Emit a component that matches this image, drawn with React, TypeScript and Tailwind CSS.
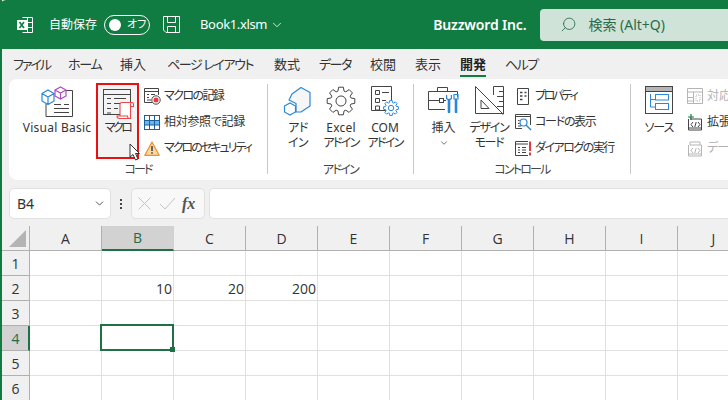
import { ChevronDown, Search } from "lucide-react";
import type { ReactNode } from "react";

const gray = "#444";
const blue = "#2b88d8";

function Svg({ w, h, children, className }: { w: number; h: number; children: ReactNode; className?: string }) {
  return (
    <svg width={w} height={h} viewBox={`0 0 ${w} ${h}`} fill="none" className={className}>
      {children}
    </svg>
  );
}

function ExcelLogo() {
  return (
    <Svg w={18} h={18}>
      <path d="M6.5 1.5H16.5V16.5H6.5M6.5 6.5H16.5M6.5 11.5H16.5M11.5 1.5V16.5" stroke="#fff" />
      <rect x="1" y="4" width="10" height="10" fill="#fff" />
      <path d="M3.5 6L8 12M8 6L3.5 12" stroke="#107c41" strokeWidth="1.6" />
    </Svg>
  );
}

function SaveIcon() {
  return (
    <Svg w={17} h={17}>
      <path d="M.5 .5H16.5V16.5H3L.5 14Z M4.5 .5V6.5H12.5V.5 M4.5 16.5V10.5H12.5V16.5" stroke="#fff" />
    </Svg>
  );
}

function VbIcon() {
  return (
    <Svg w={32} h={31}>
      <path d="M25 4.5H31.5V30.5H5V18" stroke={gray} />
      <path d="M13 18.5H20M13 22.5H28M13 26.5H28M23 18.5H28" stroke={gray} />
      <path d="M1 7.5L7 4L13 7.5V15L7 18.5L1 15ZM1 7.5L7 11L13 7.5M7 11V18.5" fill="#fff" stroke={blue} strokeWidth="1.2" />
      <path d="M14 4L19.5 1L25 4V10L19.5 13L14 10ZM14 4L19.5 7L25 4M19.5 7V13" fill="#fff" stroke="#b146c2" strokeWidth="1.2" />
    </Svg>
  );
}

function MacroIcon() {
  return (
    <Svg w={31} h={31}>
      <rect x=".5" y=".5" width="27" height="25" stroke={gray} />
      <path d="M.5 5.5H27.5" stroke={gray} />
      <path d="M4 9.5H8M11 9.5H23M4 14.5H8M11 14.5H23M4 19.5H8M11 19.5H15M4 24H8" stroke={gray} />
      <path d="M17 27V15Q17 13.5 19 13.5H29Q30.5 13.5 30.5 15.5V17.5H27.5V29.5H16.5Q14 29.5 14 27H24.5Q24.5 28.5 25.5 29.5M27.5 17.5V15.5Q27.5 13.5 29 13.5" fill="#fff" stroke="#e8484a" strokeWidth="1.1" />
    </Svg>
  );
}

function RecordIcon() {
  return (
    <Svg w={17} h={17}>
      <path d="M8 14.5H.5V.5H14.5V7M.5 3.5H14.5" stroke={gray} />
      <path d="M3 6.5H5M7 6.5H11M3 9.5H5M3 12H7" stroke={gray} />
      <circle cx="12" cy="12" r="4.2" fill="#fff" stroke={gray} />
      <circle cx="12" cy="12" r="2.5" fill="#e8383b" />
    </Svg>
  );
}

function RelativeIcon() {
  return (
    <Svg w={16} h={15}>
      <rect x=".5" y=".5" width="15" height="14" fill="#fff" stroke="#1b5f9e" />
      <rect x="1" y="6" width="14" height="4" fill="#6db4e8" />
      <path d="M.5 5.5H15.5M.5 10H15.5M5.5 .5V14.5M10.5 .5V14.5" stroke="#1b5f9e" />
    </Svg>
  );
}

function WarnIcon() {
  return (
    <Svg w={16} h={15}>
      <path d="M8 1L15.2 14.3H.8Z" fill="#fcd8a0" stroke="#e8912d" strokeWidth="1.2" strokeLinejoin="round" />
      <path d="M8 5V10M8 11.2V12.8" stroke="#333" strokeWidth="1.4" />
    </Svg>
  );
}

function AddinIcon() {
  return (
    <Svg w={30} h={30}>
      <path d="M9 8L18 1.5L27 6.5V20L18 26H13V17.5L6 14Z" fill="#f6f6f6" stroke={blue} strokeWidth="1.2" strokeLinejoin="round" />
      <path d="M1.5 20L7 17L12.5 20V26L7 29L1.5 26Z" fill="#fff" stroke={blue} strokeWidth="1.2" />
    </Svg>
  );
}

function GearPath({ c, r, color, sw = 1 }: { c: number; r: number; color: string; sw?: number }) {
  const pts: string[] = [];
  for (let i = 0; i < 8; i++) {
    const a = (i * Math.PI) / 4;
    for (const [d, rr] of [[-0.3, r * 0.74], [-0.17, r], [0.17, r], [0.3, r * 0.74]] as const) {
      pts.push(`${(c + Math.sin(a + d) * rr).toFixed(2)},${(c - Math.cos(a + d) * rr).toFixed(2)}`);
    }
  }
  return (
    <>
      <polygon points={pts.join(" ")} fill="#fff" stroke={color} strokeWidth={sw} strokeLinejoin="round" />
      <circle cx={c} cy={c} r={r * 0.36} fill="#fff" stroke={color} strokeWidth={sw} />
    </>
  );
}

function ExcelAddinIcon() {
  return (
    <Svg w={30} h={30}>
      <GearPath c={15} r={14} color={gray} />
    </Svg>
  );
}

function ComAddinIcon() {
  return (
    <Svg w={28} h={30}>
      <path d="M.5 .5H20.5V24.5H.5Z" stroke={gray} />
      <path d="M4.5 4.5H8.5V8.5H4.5ZM4.5 12.5H8.5V16.5H4.5ZM4.5 20H8.5V24H4.5Z M11 6.5H18M11 14.5H15" stroke={gray} />
      <svg x="12" y="14" width="16" height="16" viewBox="0 0 16 16">
        <GearPath c={8} r={7.5} color={blue} />
      </svg>
    </Svg>
  );
}

function ToolboxIcon() {
  return (
    <Svg w={31} h={27}>
      <path d="M9.5 5V1.5H19.5V5" stroke={gray} />
      <path d="M17 23.5H.5V5.5H29.5V11M.5 14.5H11M16 14.5H18" stroke={gray} />
      <rect x="11.5" y="12.5" width="4" height="4" stroke={gray} />
      <path d="M21 14V26M28 14V26" stroke={blue} strokeWidth="2.6" strokeLinecap="round" />
      <path d="M18.6 9V12.5Q21 15 23.4 12.5V9M26 8.5H30V13H26Z" stroke={blue} strokeWidth="1.2" />
    </Svg>
  );
}

function DesignIcon() {
  return (
    <Svg w={29} h={29}>
      <path d="M.5 .5L27.5 27.5H.5Z M6 14L14 22.5H6Z" stroke={gray} strokeLinejoin="round" />
      <path d="M18.5 .5H28.5V28H27M18.5 .5V9M24 5.5H28M22 10.5H28M24 15.5H28M22 20.5H28" stroke={gray} />
    </Svg>
  );
}

function PropIcon() {
  return (
    <Svg w={16} h={17}>
      <path d="M2.5 .5H13.5V16.5H2.5Z" stroke={gray} />
      <path d="M5 4.5H7.5M5 8H7.5M5 11.5H7.5M9.5 4.5H11.5M9.5 8H11.5" stroke={gray} strokeWidth="1.4" />
    </Svg>
  );
}

function CodeIcon() {
  return (
    <Svg w={17} h={17}>
      <path d="M7 14.5H.5V.5H15.5V11M.5 2.5H15.5" stroke={gray} strokeWidth="1" />
      <circle cx="8.5" cy="8.5" r="3.5" fill="#fff" stroke={blue} strokeWidth="1.2" />
      <path d="M11 11L16 16" stroke={blue} strokeWidth="1.4" />
      <path d="M3 6.5H4.5M3 9.5H4.5M3 12H6" stroke={gray} />
    </Svg>
  );
}

function DialogIcon() {
  return (
    <Svg w={17} h={15}>
      <path d="M13 14.5H.5V.5H13M.5 3H13" stroke={gray} />
      <path d="M3 6.5H5M7 6.5H11M3 9H5M7 9H11M3 11.5H5M7 11.5H11" stroke={gray} />
      <path d="M15 .5V10M15 11.5V14.5" stroke="#e8383b" strokeWidth="2" />
    </Svg>
  );
}

function SourceIcon() {
  return (
    <Svg w={28} h={28}>
      <rect x=".5" y=".5" width="27" height="27" stroke={gray} />
      <rect x="1" y="1" width="26" height="4" fill="#b5b5b5" />
      <path d="M1 5.5H27" stroke={gray} />
      <path d="M5.5 8V21H10M5.5 13.5H10" stroke={blue} />
      <rect x="10.5" y="8.5" width="13" height="5.5" stroke={blue} />
      <rect x="10.5" y="17.5" width="13" height="6" stroke={blue} />
    </Svg>
  );
}

function MapIcon() {
  const c = "#b5b5b5";
  return (
    <Svg w={16} h={16}>
      <path d="M.5 .5H15.5V15.5H.5ZM.5 4H15.5M.5 9.5H7M.5 13H7M6.5 4V15.5" stroke={c} />
      <path d="M9 7H13V13H9Z" stroke={c} strokeDasharray="1 1" />
    </Svg>
  );
}

function PackIcon({ color, plus }: { color: string; plus?: boolean }) {
  return (
    <Svg w={17} h={17}>
      <path d="M3 5H14.5V16H1.5V5M1.5 14H14.5" stroke={color} />
      <path d="M6 8L4 10.5L6 13M11 8L13 10.5L11 13M9.2 8L7.8 13" stroke={color} />
      {plus ? <path d="M4 0V6M1 3H7" stroke="#107c41" strokeWidth="1.2" /> : <path d="M3 5V2H13V5" stroke={color} />}
    </Svg>
  );
}

function Big({ icon, lines, w, className = "" }: { icon: ReactNode; lines: ReactNode[]; w: number; className?: string }) {
  return (
    <div style={{ width: w }} className={`flex h-[80px] shrink-0 flex-col items-center pt-[7px] leading-[15px] text-[#333] ${className}`}>
      <div className="flex h-[34px] items-start justify-center">{icon}</div>
      {lines.map((l, i) => (
        <div key={i} className="flex h-[15px] items-center whitespace-nowrap">{l}</div>
      ))}
    </div>
  );
}

function Small({ icon, text, cls = "", disabled }: { icon: ReactNode; text: string; cls?: string; disabled?: boolean }) {
  return (
    <div className={`flex h-[26px] items-center whitespace-nowrap ${disabled ? "text-[#b0b0b0]" : "text-[#333]"}`}>
      <div className="flex w-[20px] shrink-0 items-center">{icon}</div>
      <span className={cls}>{text}</span>
    </div>
  );
}

function Group({ w, label, labelCls = "", children }: { w: number; label: string; labelCls?: string; children: ReactNode }) {
  return (
    <div style={{ width: w }} className="flex h-full shrink-0 flex-col">
      <div className="flex h-[80px] items-start">{children}</div>
      <div className={`mt-[3px] text-center leading-[15px] text-[#444] ${labelCls}`}>{label}</div>
    </div>
  );
}

function Sep() {
  return <div className="mt-[5px] h-[90px] w-px shrink-0 bg-[#c8c8c8]" />;
}

const tabs = [
  { t: "ファイル", cls: "w-[55px] tracking-[-2px]" },
  { t: "ホーム", cls: "w-[52px] tracking-[-1.3px]" },
  { t: "挿入", cls: "w-[47px]" },
  { t: "ページ レイアウト", cls: "w-[107px] tracking-[-1.4px]" },
  { t: "数式", cls: "w-[45px]" },
  { t: "データ", cls: "w-[51px] tracking-[-1.5px]" },
  { t: "校閲", cls: "w-[45px]" },
  { t: "表示", cls: "w-[45px]" },
];

const cols = ["A", "B", "C", "D", "E", "F", "G", "H", "I", "J"];
const rows = [1, 2, 3, 4, 5, 6];
const data: Record<string, string> = { B2: "10", C2: "20", D2: "200" };

export default function App() {
  return (
    <div className="relative h-[400px] w-[728px] overflow-hidden border-l-2 border-[#107c41] bg-[#f0f0f0] font-['Noto_Sans','Noto_Sans_CJK_JP',sans-serif] text-[12px] [font-feature-settings:'palt']">
      {/* title bar */}
      <div className="-ml-[2px] flex h-[49px] items-center rounded-tl-[6px] bg-[#107c41] text-white">
        <div className="ml-[16px] w-[33px]"><ExcelLogo /></div>
        <span>自動保存</span>
        <div className="ml-[7px] flex h-[20px] w-[46px] items-center rounded-full border border-white pl-[4px]">
          <div className="h-[12px] w-[12px] rounded-full bg-white" />
          <span className="ml-[6px] text-[11px]">オフ</span>
        </div>
        <div className="ml-[13px]"><SaveIcon /></div>
        <span className="ml-[20px] text-[13px] tracking-[-.35px]">Book1.xlsm</span>
        <ChevronDown size={14} strokeWidth={1.4} className="ml-[3px]" />
        <span className="ml-[149px] text-[14px] font-semibold tracking-[-.15px]">Buzzword Inc.</span>
        <div className="ml-[14px] flex h-[32px] flex-1 items-center rounded-l-[4px] bg-[#cfe3d8] text-[#2b6b4b]">
          <Search size={17} strokeWidth={1.2} className="ml-[20px] -scale-x-100" />
          <span className="ml-[11px] text-[14px]">検索 (Alt+Q)</span>
        </div>
      </div>

      {/* tabs */}
      <div className="flex h-[30px] items-center pt-[2px] pl-[11px] text-[13px] text-[#333]">
        {tabs.map((t) => (
          <span key={t.t} className={`shrink-0 whitespace-nowrap ${t.cls}`}>{t.t}</span>
        ))}
        <div className="relative w-[45px] shrink-0 font-bold text-[#222]">
          <span>開発</span>
          <div className="absolute -bottom-[2px] left-0 h-[2px] w-[26px] bg-[#107c41]" />
        </div>
        <span className="tracking-[-1.5px]">ヘルプ</span>
      </div>

      {/* ribbon */}
      <div className="ml-[7px] flex h-[101px] rounded-l-[8px] bg-white">
        <Group w={258} label="コード" labelCls="tracking-[-2px]">
          <div className="ml-[12px] shrink-0">
            <Big w={72} icon={<VbIcon />} lines={[<span className="tracking-[.25px]">Visual Basic</span>]} />
          </div>
          <div className="mt-[4px] ml-[3px] box-border flex h-[76px] w-[43px] shrink-0 flex-col items-center border-2 border-[#e81010] bg-[#f3f3f3] text-[#333]">
            <div className="mt-[4px] ml-[1px] h-[31px]"><MacroIcon /></div>
            <span className="leading-[15px] tracking-[-2.6px]">マクロ</span>
          </div>
          <div className="ml-[5px] mt-[4px] flex flex-col">
            <Small icon={<RecordIcon />} text="マクロの記録" cls="tracking-[-1.6px]" />
            <Small icon={<RelativeIcon />} text="相対参照で記録" cls="tracking-[-.3px]" />
            <Small icon={<WarnIcon />} text="マクロのセキュリティ" cls="tracking-[-2px]" />
          </div>
        </Group>
        <Sep />
        <Group w={145} label="アドイン" labelCls="tracking-[-1.7px]">
          <div className="ml-[15px]">
            <Big w={30} icon={<AddinIcon />} lines={[<span className="tracking-[-.5px]">アド</span>, <span className="tracking-[-.5px]">イン</span>]} />
          </div>
          <div className="ml-[11px]">
            <Big w={34} icon={<ExcelAddinIcon />} lines={[<span className="tracking-[.2px]">Excel</span>, <span className="tracking-[-1.7px]">アドイン</span>]} />
          </div>
          <div className="ml-[8px]">
            <Big w={38} icon={<ComAddinIcon />} lines={["COM", <span className="tracking-[-1.7px]">アドイン</span>]} />
          </div>
        </Group>
        <Sep />
        <Group w={216} label="コントロール" labelCls="tracking-[-1.8px]">
          <div className="ml-[14px]">
            <Big w={31} icon={<ToolboxIcon />} lines={["挿入", <ChevronDown size={10} strokeWidth={1.6} />]} />
          </div>
          <div className="ml-[8px]">
            <Big w={44} icon={<DesignIcon />} lines={[<span className="tracking-[-1.2px]">デザイン</span>, <span className="tracking-[-1.3px]">モード</span>]} />
          </div>
          <div className="ml-[4px] mt-[4px] flex flex-col">
            <Small icon={<PropIcon />} text="プロパティ" cls="tracking-[-2.4px]" />
            <Small icon={<CodeIcon />} text="コードの表示" cls="tracking-[-1.3px]" />
            <Small icon={<DialogIcon />} text="ダイアログの実行" cls="tracking-[-1.5px]" />
          </div>
        </Group>
        <Sep />
        <Group w={98} label="">
          <div className="ml-[12px]">
            <Big w={32} icon={<SourceIcon />} lines={[<span className="tracking-[-1px]">ソース</span>]} />
          </div>
          <div className="ml-[12px] mt-[4px] flex flex-col">
            <Small disabled icon={<MapIcon />} text="対応" />
            <Small icon={<PackIcon color={gray} plus />} text="拡張" />
            <Small disabled icon={<PackIcon color="#b5b5b5" />} text="デー" cls="tracking-[-1px]" />
          </div>
        </Group>
      </div>

      {/* formula bar */}
      <div className="flex h-[46px] items-start pt-[8px]">
        <div className="ml-[7px] flex h-[31px] w-[102px] shrink-0 items-center justify-between rounded-[5px] border border-[#e0e0e0] bg-white pl-[7px] pr-[4px] text-[14px] text-[#333]">
          B4
          <ChevronDown size={13} strokeWidth={1.5} />
        </div>
        <div className="flex h-[31px] w-[20px] shrink-0 flex-col items-center justify-center gap-[2px]">
          <i className="h-[2px] w-[2px] bg-[#444]" />
          <i className="h-[2px] w-[2px] bg-[#444]" />
          <i className="h-[2px] w-[2px] bg-[#444]" />
        </div>
        <div className="flex h-[31px] w-[74px] shrink-0 items-center rounded-[5px] border border-[#e0e0e0] bg-[#f8f8f8] pl-[6px]">
          <Svg w={13} h={13}><path d="M.5 .5L12.5 12.5M12.5 .5L.5 12.5" stroke="#c4c4c4" /></Svg>
          <Svg w={17} h={13} className="ml-[8px]"><path d="M1 7L6 12L16 1" stroke="#c4c4c4" /></Svg>
          <span className="ml-[6px] font-['Liberation_Serif',serif] text-[16px] font-bold italic leading-none text-[#555]">fx</span>
        </div>
        <div className="ml-[4px] h-[31px] flex-1 rounded-l-[5px] border border-r-0 border-[#e0e0e0] bg-white" />
      </div>

      {/* sheet */}
      <div className="bg-white font-['Open_Sans','Noto_Sans_CJK_JP',sans-serif] text-[14px] text-[#333]">
        <div className="flex h-[25px]">
          <div className="relative h-[25px] w-[28px] shrink-0 border-r border-b border-[#b0b0b0] bg-[#f0f0f0]">
            <div className="absolute top-[4px] left-[7px] h-0 w-0 border-b-[17px] border-l-[17px] border-b-[#b4b4b4] border-l-transparent" />
          </div>
          {cols.map((c) => (
            <div
              key={c}
              className={
                c === "B"
                  ? "flex w-[72px] shrink-0 items-center justify-center border-r border-b-2 border-[#d0d0d0] border-b-[#1f7145] bg-[#d2d2d2] text-[#1f6b47]"
                  : "flex w-[72px] shrink-0 items-center justify-center border-r border-b border-[#b0b0b0] bg-[#f0f0f0]"
              }
            >
              {c}
            </div>
          ))}
        </div>
        {rows.map((r) => (
          <div key={r} className="flex h-[25px]">
            <div
              className={
                r === 4
                  ? "flex w-[28px] shrink-0 items-center justify-center border-r-2 border-b border-[#b0b0b0] border-r-[#1f7145] bg-[#d2d2d2] pl-[1px] text-[#1f6b47]"
                  : "flex w-[28px] shrink-0 items-center justify-center border-r border-b border-[#b0b0b0] bg-[#f0f0f0]"
              }
            >
              {r}
            </div>
            {cols.map((c) => (
              <div key={c} className="relative flex w-[72px] shrink-0 items-center justify-end border-r border-b border-[#e0e0e0] pr-[1px]">
                {data[`${c}${r}`]}
                {c === "B" && r === 4 && (
                  <div className="absolute -top-[2px] -left-[2px] z-10 h-[27px] w-[74px] border-2 border-[#1f7145]">
                    <div className="absolute -right-[3px] -bottom-[3px] h-[5px] w-[5px] bg-[#1f7145]" />
                  </div>
                )}
              </div>
            ))}
          </div>
        ))}
      </div>

      {/* mouse pointer */}
      <svg className="absolute top-[143px] left-[127px] z-20" width="14" height="19" viewBox="0 0 14 19">
        <path d="M1 1V14L4 11.5L6.5 17L9 16L6.5 10.5H10.5Z" fill="#fff" stroke="#333" />
      </svg>
    </div>
  );
}
